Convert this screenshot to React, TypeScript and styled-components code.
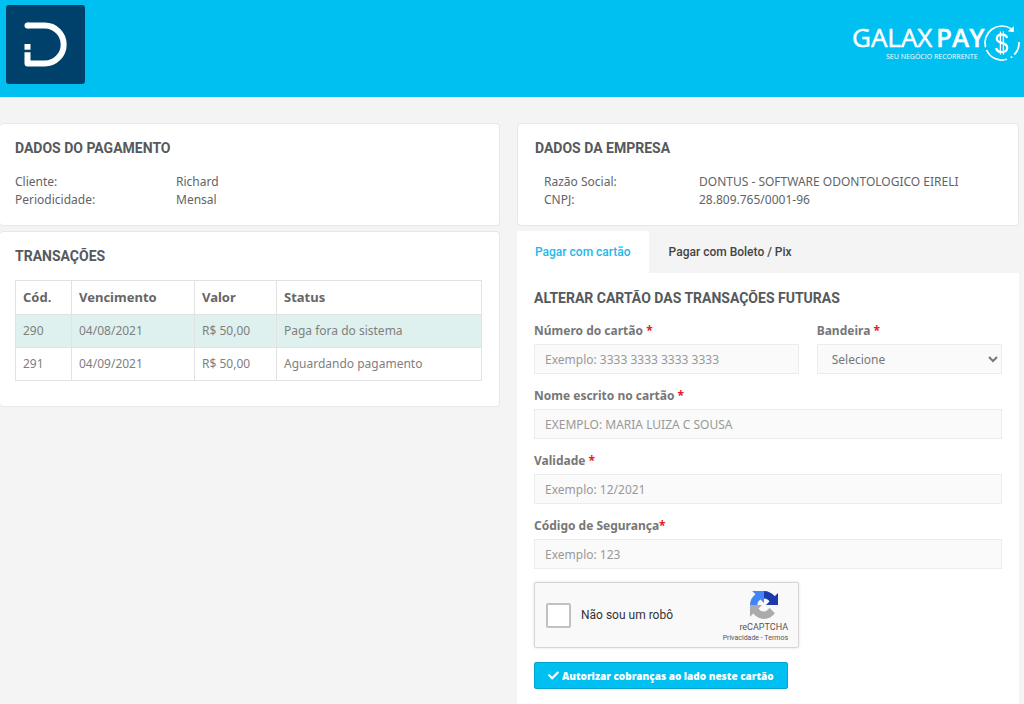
import React from "react";
import styled, { createGlobalStyle } from "styled-components";
import { FaCheck } from "react-icons/fa";

const GlobalStyle = createGlobalStyle`
  *, *::before, *::after { box-sizing: border-box; }
  body {
    margin: 0;
    background: #f4f4f4;
    color: #5f6468;
    font-family: "Noto Sans", "Open Sans", sans-serif;
    font-size: 12px;
    line-height: 18px;
  }
`;

const Header = styled.header`
  display: flex;
  justify-content: space-between;
  align-items: flex-start;
  height: 97px;
  padding: 5px 4px 0 6px;
  background: #00c0f1;
`;

const BrandLink = styled.a`
  display: block;
  line-height: 0;
`;

const Partner = styled.div`
  margin-top: 12px;
  line-height: 0;
`;

const Columns = styled.main`
  display: grid;
  grid-template-columns: minmax(0, 500fr) minmax(0, 502fr);
  gap: 17px;
  padding: 26px 5px 0 0;
`;

const Column = styled.div`
  display: flex;
  flex-direction: column;
  gap: 5px;
`;

const Card = styled.section<{ $flush?: boolean }>`
  padding: 14px 17px 16px ${(p) => (p.$flush ? "15px" : "17px")};
  background: #fff;
  border: 1px solid #e7e7e7;
  border-left-width: ${(p) => (p.$flush ? "0" : "1px")};
  border-radius: 4px;
`;

const Title = styled.h2`
  margin: 0 0 14px;
  color: #55595c;
  font: 700 14px/20px Roboto, sans-serif;
  text-transform: uppercase;
`;

const Info = styled.dl<{ $label: number; $indent?: boolean }>`
  display: grid;
  grid-template-columns: ${(p) => p.$label}px 1fr;
  margin: 0;
  padding: 1px 0 0 ${(p) => (p.$indent ? "9px" : "0")};

  dd { margin: 0; }
`;

const Table = styled.table`
  width: 100%;
  margin-bottom: 9px;
  table-layout: fixed;
  border-collapse: collapse;
  color: #808080;
`;

const HeadCell = styled.th<{ $width?: number }>`
  width: ${(p) => (p.$width ? `${p.$width}px` : "auto")};
  height: 34px;
  padding: 0 7px 2px;
  border: 1px solid #e2e2e2;
  color: #666;
  font-size: 13px;
  text-align: left;
`;

const Row = styled.tr<{ $paid?: boolean }>`
  background: ${(p) => (p.$paid ? "#def1ee" : "#fff")};
`;

const Cell = styled.td`
  height: 33px;
  padding: 0 7px;
  border: 1px solid #e2e2e2;
`;

const Tabs = styled.div`
  display: flex;
  gap: 2px;
  height: 42px;
`;

const Tab = styled.button<{ $active?: boolean }>`
  padding: 0 18px;
  border: 0;
  background: ${(p) => (p.$active ? "#fff" : "transparent")};
  color: ${(p) => (p.$active ? "#23b7ea" : "#444")};
  font: 500 12px/20px Roboto, sans-serif;
  cursor: pointer;
`;

const Form = styled.form`
  padding: 15px 17px;
  background: #fff;
`;

const FieldRow = styled.div`
  display: grid;
  grid-template-columns: 10fr 7fr;
  gap: 18px;
`;

const Field = styled.div`
  display: flex;
  flex-direction: column;
  gap: 4px;
  margin-bottom: 13px;
  color: #777;
`;

const Label = styled.label`
  font-weight: 700;
`;

const Star = styled.span`
  color: #e02222;
`;

const Input = styled.input`
  width: 100%;
  height: 30px;
  padding: 0 10px;
  border: 1px solid #ececec;
  background: #fafafa;
  color: #777;
  font: inherit;

  &::placeholder { color: #999; opacity: 1; }
`;

const Select = styled.select`
  width: 100%;
  height: 30px;
  padding: 0 0 0 10px;
  border: 1px solid #ececec;
  border-radius: 0;
  background: #fafafa;
  color: #777;
  font: inherit;
`;

const Captcha = styled.div`
  display: flex;
  align-items: center;
  width: 265px;
  height: 66px;
  margin-bottom: 14px;
  padding: 0 10px 0 11px;
  border: 1px solid #d6d6d6;
  border-radius: 2px;
  background: #f9f9f9;
  box-shadow: 0 0 3px rgba(0, 0, 0, 0.12);
  color: #333;
  font-family: Roboto, sans-serif;
`;

const RobotBox = styled.input`
  appearance: none;
  width: 25px;
  height: 25px;
  margin: 0 10px 0 0;
  border: 2px solid #c1c1c1;
  border-radius: 2px;
  background: #fff;
`;

const CaptchaBrand = styled.div`
  display: flex;
  flex-direction: column;
  align-items: flex-end;
  margin-left: auto;
  padding-top: 4px;
  color: #555;
  font-size: 9px;
  line-height: 11px;

  svg { margin: 0 10px 3px 0; }
`;

const Legal = styled.div`
  font-size: 7px;

  a { color: inherit; text-decoration: none; }
`;

const Submit = styled.button`
  display: flex;
  align-items: center;
  gap: 3px;
  height: 27px;
  padding: 0 13px;
  border: 1px solid #00a5cf;
  border-radius: 2px;
  background: #00c0f1;
  color: #fff;
  font: 800 10px/16px "Open Sans", sans-serif;
  cursor: pointer;
`;

function DontusLogo() {
  return (
    <svg width="79" height="79" viewBox="0 0 79 79" role="img" aria-label="Dontus">
      <rect width="79" height="79" rx="3" fill="#00416c" />
      <path d="M21.500 20.500H38.700A19 19 0 0 1 38.700 58.500H21.500V47.300" fill="none" stroke="#fff" strokeWidth="6" strokeLinejoin="round" />
      <circle cx="21.500" cy="20.500" r="3" fill="#fff" />
      <rect x="18.500" y="39" width="6" height="5.700" fill="#fff" />
    </svg>
  );
}

function GalaxPayLogo() {
  return (
    <svg width="168" height="48" viewBox="0 -4 168 48" role="img" aria-label="GalaxPay">
      <g fill="#fff" fontFamily="Open Sans, sans-serif">
        <text x="0" y="26" fontSize="26" stroke="#fff" strokeWidth="0.500">GALAX</text>
        <text x="84" y="26" fontSize="26" fontWeight="600" stroke="#fff" strokeWidth="0.300">PAY</text>
        <text x="34" y="38" fontSize="7">SEU NEGÓCIO RECORRENTE</text>
      </g>
      <g fill="none" stroke="#fff" strokeWidth="1.700">
        <path d="M133.500 26.300A17 17 0 0 1 159 7.600" />
        <path d="M134.500 29A17 17 0 0 0 155 38.300" />
        <path d="M158.700 36.600L160.300 35.600" />
        <path d="M162.300 33.700A17 17 0 0 0 167 21" />
        <path d="M155 17C154.500 14.500 152.500 13.700 149.800 13.700C146.700 13.700 144.800 15.300 144.800 17.800C144.800 23.300 155.200 20.500 155.200 26.700C155.200 29.500 153 31 149.800 31C146.500 31 144.500 29.600 144.200 27" strokeWidth="2.200" />
        <path d="M148.400 10.500V33.500M151.400 10.500V33.500" strokeWidth="1.300" />
      </g>
      <path d="M161.800 5.200V11.200L155.800 10.200Z" fill="#fff" />
    </svg>
  );
}

function RecaptchaLogo() {
  return (
    <svg width="28" height="28" viewBox="0 0 64 64" aria-hidden="true">
      <path d="M64 31.950V4.600L56.500 12.200C50.300 4.600 41.500 0 32 0V17C39 17 42 20 44.500 24L36.500 31.950Z" fill="#1c3aa9" />
      <path d="M32 0H5L12.500 7.500C4.500 13.500 0 22 0 32H17C17 25 20 22 24 19.500L32 27.500Z" fill="#4285f4" />
      <path d="M0 32V59L7.500 51.500C14 59.500 22 64 32 64C42 64 51 59 57 51L44.500 38.500C41 44 37 47 32 47C26 47 22 44 19.500 40L27.500 32Z" fill="#ababab" />
    </svg>
  );
}

const charges = [
  { code: "290", due: "04/08/2021", value: "R$ 50,00", status: "Paga fora do sistema", paid: true },
  { code: "291", due: "04/09/2021", value: "R$ 50,00", status: "Aguardando pagamento", paid: false },
];

export default function App() {
  return (
    <>
      <GlobalStyle />
      <Header>
        <BrandLink href="#"><DontusLogo /></BrandLink>
        <Partner><GalaxPayLogo /></Partner>
      </Header>
      <Columns>
        <Column>
          <Card $flush>
            <Title>Dados do pagamento</Title>
            <Info $label={161}>
              <dt>Cliente:</dt>
              <dd>Richard</dd>
              <dt>Periodicidade:</dt>
              <dd>Mensal</dd>
            </Info>
          </Card>
          <Card $flush>
            <Title>Transações</Title>
            <Table>
              <thead>
                <tr>
                  <HeadCell $width={56}>Cód.</HeadCell>
                  <HeadCell $width={123}>Vencimento</HeadCell>
                  <HeadCell $width={82}>Valor</HeadCell>
                  <HeadCell>Status</HeadCell>
                </tr>
              </thead>
              <tbody>
                {charges.map((c) => (
                  <Row key={c.code} $paid={c.paid}>
                    <Cell>{c.code}</Cell>
                    <Cell>{c.due}</Cell>
                    <Cell>{c.value}</Cell>
                    <Cell>{c.status}</Cell>
                  </Row>
                ))}
              </tbody>
            </Table>
          </Card>
        </Column>
        <Column>
          <Card>
            <Title>Dados da empresa</Title>
            <Info $label={155} $indent>
              <dt>Razão Social:</dt>
              <dd>DONTUS - SOFTWARE ODONTOLOGICO EIRELI</dd>
              <dt>CNPJ:</dt>
              <dd>28.809.765/0001-96</dd>
            </Info>
          </Card>
          <div>
            <Tabs role="tablist">
              <Tab type="button" role="tab" aria-selected="true" $active>Pagar com cartão</Tab>
              <Tab type="button" role="tab" aria-selected="false">Pagar com Boleto / Pix</Tab>
            </Tabs>
            <Form onSubmit={(e) => e.preventDefault()}>
              <Title>Alterar cartão das transações futuras</Title>
              <FieldRow>
                <Field>
                  <Label htmlFor="number">Número do cartão <Star>*</Star></Label>
                  <Input id="number" placeholder="Exemplo: 3333 3333 3333 3333" />
                </Field>
                <Field>
                  <Label htmlFor="brand">Bandeira <Star>*</Star></Label>
                  <Select id="brand"><option>Selecione</option></Select>
                </Field>
              </FieldRow>
              <Field>
                <Label htmlFor="holder">Nome escrito no cartão <Star>*</Star></Label>
                <Input id="holder" placeholder="EXEMPLO: MARIA LUIZA C SOUSA" />
              </Field>
              <Field>
                <Label htmlFor="expiry">Validade <Star>*</Star></Label>
                <Input id="expiry" placeholder="Exemplo: 12/2021" />
              </Field>
              <Field>
                <Label htmlFor="cvv">Código de Segurança<Star>*</Star></Label>
                <Input id="cvv" placeholder="Exemplo: 123" />
              </Field>
              <Captcha>
                <RobotBox type="checkbox" id="robot" />
                <label htmlFor="robot">Não sou um robô</label>
                <CaptchaBrand>
                  <RecaptchaLogo />
                  <span>reCAPTCHA</span>
                  <Legal><a href="#">Privacidade</a> - <a href="#">Termos</a></Legal>
                </CaptchaBrand>
              </Captcha>
              <Submit type="submit"><FaCheck size={11} aria-hidden="true" />Autorizar cobranças ao lado neste cartão</Submit>
            </Form>
          </div>
        </Column>
      </Columns>
    </>
  );
}
